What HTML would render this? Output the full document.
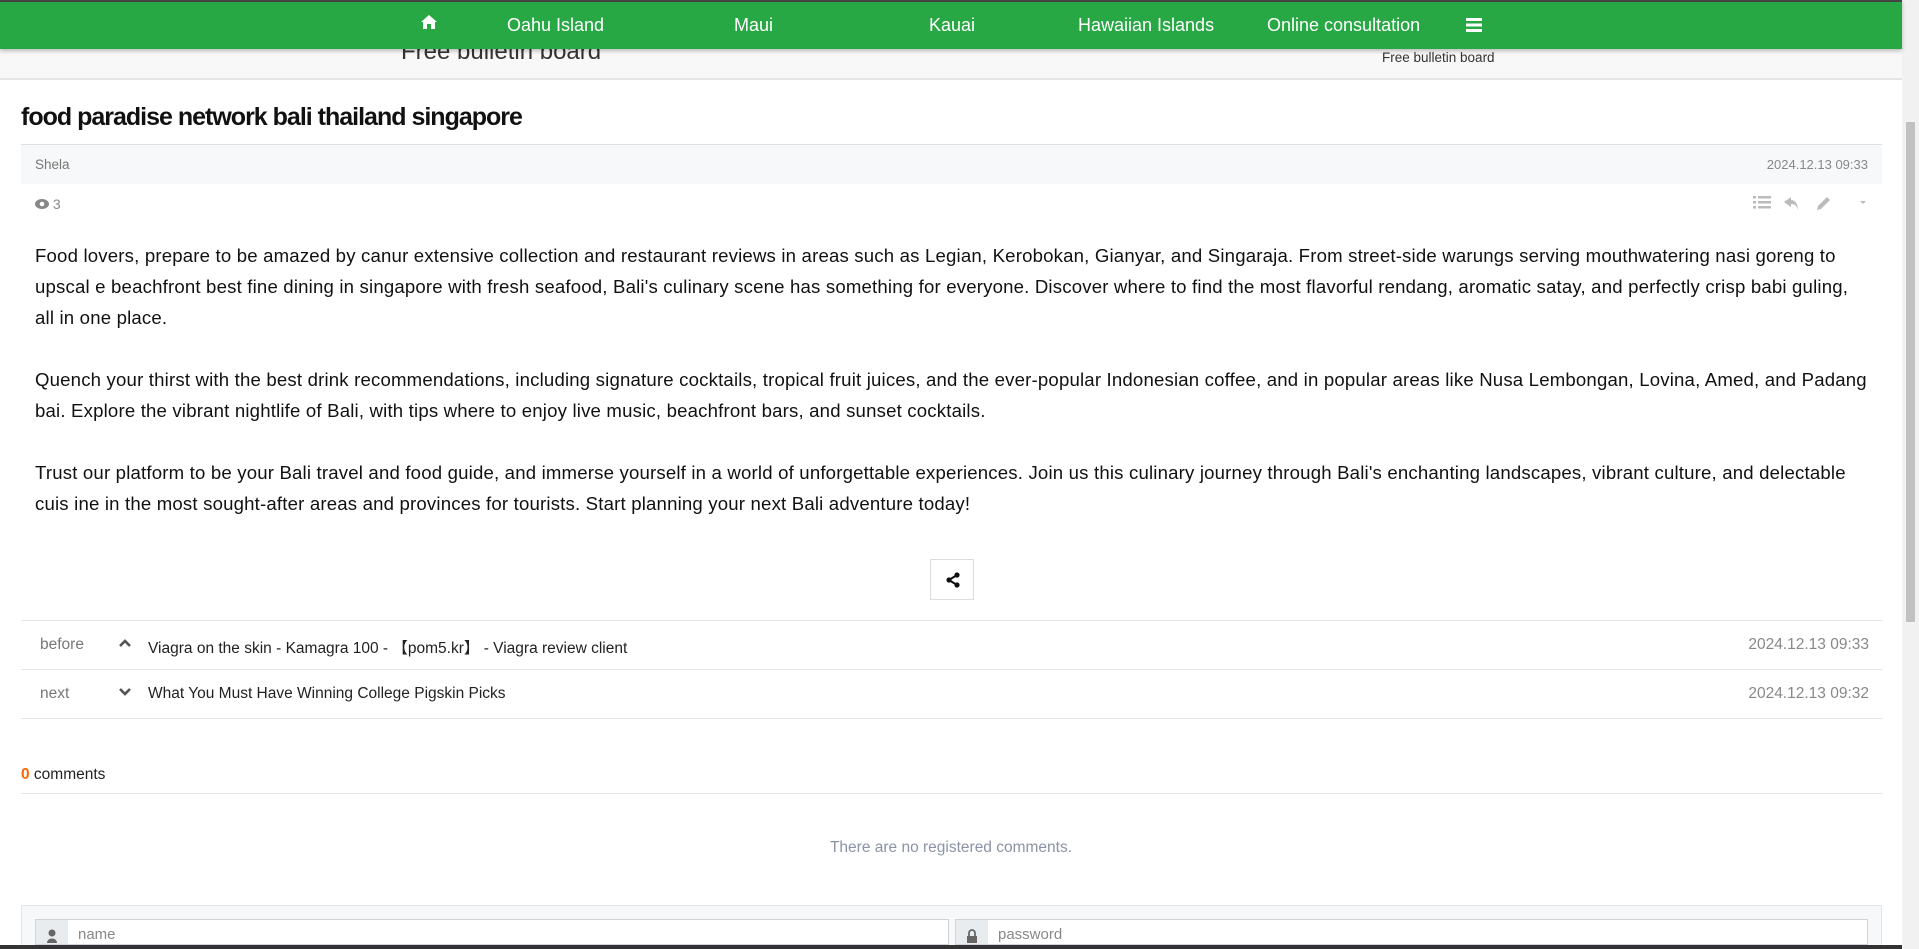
<!DOCTYPE html>
<html><head><meta charset="utf-8"><style>
*{box-sizing:border-box;margin:0;padding:0}
html,body{width:1919px;height:949px;overflow:hidden;background:#fff;font-family:"Liberation Sans",Arial,sans-serif;color:#222;position:relative}
.sb{position:absolute;right:0;top:0;width:17px;height:949px;background:#f1f1f1}
.sb div{position:absolute;left:4px;width:9px;top:122px;height:500px;background:#c1c1c1}
.nav{position:absolute;left:0;top:0;width:1902px;height:49px;background:#28a745;border-top:2px solid #444;box-shadow:0 2px 4px rgba(0,0,0,.25);z-index:2}
.nav span{position:absolute;top:13px;color:#fff;font-size:18px}
.sub{position:absolute;left:0;top:49px;width:1902px;height:31px;background:#f8f8f8;border-bottom:2px solid #e5e5e5}
.abs{position:absolute;white-space:nowrap}
.meta{position:absolute;left:21px;top:144px;width:1861px;height:40px;background:#f7f8f9;border-top:1px solid #dde0e4}
.body{position:absolute;left:35px;top:240px;width:1835px;font-size:18.6px;letter-spacing:0.18px;line-height:31px;color:#111}
.body p{margin-bottom:31px}
.row{position:absolute;left:21px;width:1861px;height:49px;border-bottom:1px solid #e2e4e8;font-size:15.5px}
.row .l{position:absolute;left:19px;top:15px;color:#777}
.row .a{position:absolute;left:97px;top:17px}
.row .t{position:absolute;left:127px;top:15px;color:#222}
.row .d{position:absolute;right:13px;top:15px;color:#888}
.inp{position:absolute;top:919px;height:40px;border:1px solid #cfd4da;background:#fff}
.inp .ic{position:absolute;left:0;top:0;width:32px;height:100%;background:#e9ecef}
.inp .p{position:absolute;left:42px;top:6px;color:#888;font-size:15px}
</style></head><body>
<div class="nav">
<span style="left:420px;top:12px"><svg width="18" height="16" viewBox="0 0 18 16"><path d="M9 1 L1 8 H3 V15 H7 V10 H11 V15 H15 V8 H17 Z" fill="#fff"/></svg></span>
<span style="left:507px">Oahu Island</span>
<span style="left:734px">Maui</span>
<span style="left:929px">Kauai</span>
<span style="left:1078px">Hawaiian Islands</span>
<span style="left:1267px">Online consultation</span>
<span style="left:1466px;top:14px"><svg width="16" height="14"><rect y="0" width="16" height="3" fill="#fff"/><rect y="5.5" width="16" height="3" fill="#fff"/><rect y="11" width="16" height="3" fill="#fff"/></svg></span>
</div>
<div class="sub"></div>
<div class="abs" style="left:401px;top:38px;font-size:24px;color:#333">Free bulletin board</div>
<div class="abs" style="left:1382px;top:50px;font-size:13.5px;color:#333">Free bulletin board</div>
<div class="abs" style="left:21px;top:103px;font-size:25px;font-weight:bold;letter-spacing:-1px;color:#111">food paradise network bali thailand singapore</div>
<div class="meta"><span class="abs" style="left:14px;top:12px;font-size:13.5px;color:#777">Shela</span><span class="abs" style="right:14px;top:12px;font-size:13px;color:#888">2024.12.13 09:33</span></div>
<div class="abs" style="left:35px;top:196px;font-size:14px;color:#888"><svg width="14" height="10" viewBox="0 0 14 10"><ellipse cx="7" cy="5" rx="7" ry="5" fill="#888"/><circle cx="7" cy="5" r="2.3" fill="#fff"/></svg> 3</div>
<div class="abs" style="left:1753px;top:194px">
<svg width="120" height="18"><g fill="#bbb"><rect x="0" y="2" width="3" height="2.5"/><rect x="5" y="2" width="13" height="2.5"/><rect x="0" y="7" width="3" height="2.5"/><rect x="5" y="7" width="13" height="2.5"/><rect x="0" y="12" width="3" height="2.5"/><rect x="5" y="12" width="13" height="2.5"/><path d="M38 3 L31 8 L38 13 V10 C42 10 44 12 45 16 C45 10 42 6 38 6 Z"/><path d="M74 3 L77 6 L68 15 L64 16 L65 12 Z"/><path d="M107 7 L113 7 L110 10 Z"/></g></svg></div>
<div class="body">
<p>Food lovers, prepare to be amazed by canur extensive collection and restaurant reviews in areas such as Legian, Kerobokan, Gianyar, and Singaraja. From street-side warungs serving mouthwatering nasi goreng to upscal e beachfront best fine dining in singapore with fresh seafood, Bali's culinary scene has something for everyone. Discover where to find the most flavorful rendang, aromatic satay, and perfectly crisp babi guling, all in one place.</p>
<p>Quench your thirst with the best drink recommendations, including signature cocktails, tropical fruit juices, and the ever-popular Indonesian coffee, and in popular areas like Nusa Lembongan, Lovina, Amed, and Padang bai. Explore the vibrant nightlife of Bali, with tips where to enjoy live music, beachfront bars, and sunset cocktails.</p>
<p>Trust our platform to be your Bali travel and food guide, and immerse yourself in a world of unforgettable experiences. Join us this culinary journey through Bali's enchanting landscapes, vibrant culture, and delectable cuis ine in the most sought-after areas and provinces for tourists. Start planning your next Bali adventure today!</p>
</div>
<div class="abs" style="left:930px;top:559px;width:44px;height:41px;border:1px solid #ddd;background:#fff"><svg style="position:absolute;left:14px;top:12px" width="16" height="16" viewBox="0 0 16 16"><circle cx="12" cy="3" r="2.6" fill="#111"/><circle cx="12" cy="13" r="2.6" fill="#111"/><circle cx="4" cy="8" r="2.6" fill="#111"/><path d="M12 3 L4 8 L12 13" stroke="#111" stroke-width="2" fill="none"/></svg></div>
<div style="position:absolute;left:21px;top:620px;width:1861px;border-top:1px solid #e2e4e8"></div>
<div class="row" style="top:621px"><span class="l">before</span><svg class="a" width="14" height="10" viewBox="0 0 14 10"><path d="M2 8 L7 3 L12 8" stroke="#555" stroke-width="2.6" fill="none"/></svg><span class="t">Viagra on the skin - Kamagra 100 - 【pom5.kr】 - Viagra review client</span><span class="d">2024.12.13 09:33</span></div>
<div class="row" style="top:670px"><span class="l">next</span><svg class="a" width="14" height="10" viewBox="0 0 14 10"><path d="M2 2 L7 7 L12 2" stroke="#555" stroke-width="2.6" fill="none"/></svg><span class="t">What You Must Have Winning College Pigskin Picks</span><span class="d">2024.12.13 09:32</span></div>
<div class="abs" style="left:21px;top:766px;font-size:15.5px;color:#222"><span style="color:#f60;font-weight:bold">0</span> comments</div>
<div style="position:absolute;left:21px;top:793px;width:1861px;border-top:1px solid #e2e4e8"></div>
<div class="abs" style="left:0;width:1902px;text-align:center;top:839px;font-size:15.5px;color:#8a94a6">There are no registered comments.</div>
<div style="position:absolute;left:21px;top:905px;width:1861px;height:40px;background:#f7f8f9;border:1px solid #e2e4e8;border-bottom:none"></div>
<div class="inp" style="left:35px;width:914px;height:26px"><div class="ic"><svg style="margin:9px 0 0 11px" width="10" height="14"><circle cx="5" cy="4" r="3.5" fill="#666"/><path d="M0 14 C0 8 10 8 10 14 Z" fill="#666"/></svg></div><span class="p">name</span></div>
<div class="inp" style="left:955px;width:913px;height:26px"><div class="ic"><svg style="margin:9px 0 0 11px" width="10" height="14"><path d="M2 7 V4 A3 3 0 0 1 8 4 V7" stroke="#666" stroke-width="1.8" fill="none"/><rect x="0" y="7" width="10" height="7" fill="#666"/></svg></div><span class="p">password</span></div>
<div style="position:absolute;left:0;top:945px;width:1919px;height:4px;background:#333"></div>
<div class="sb"><div></div></div>
</body></html>
